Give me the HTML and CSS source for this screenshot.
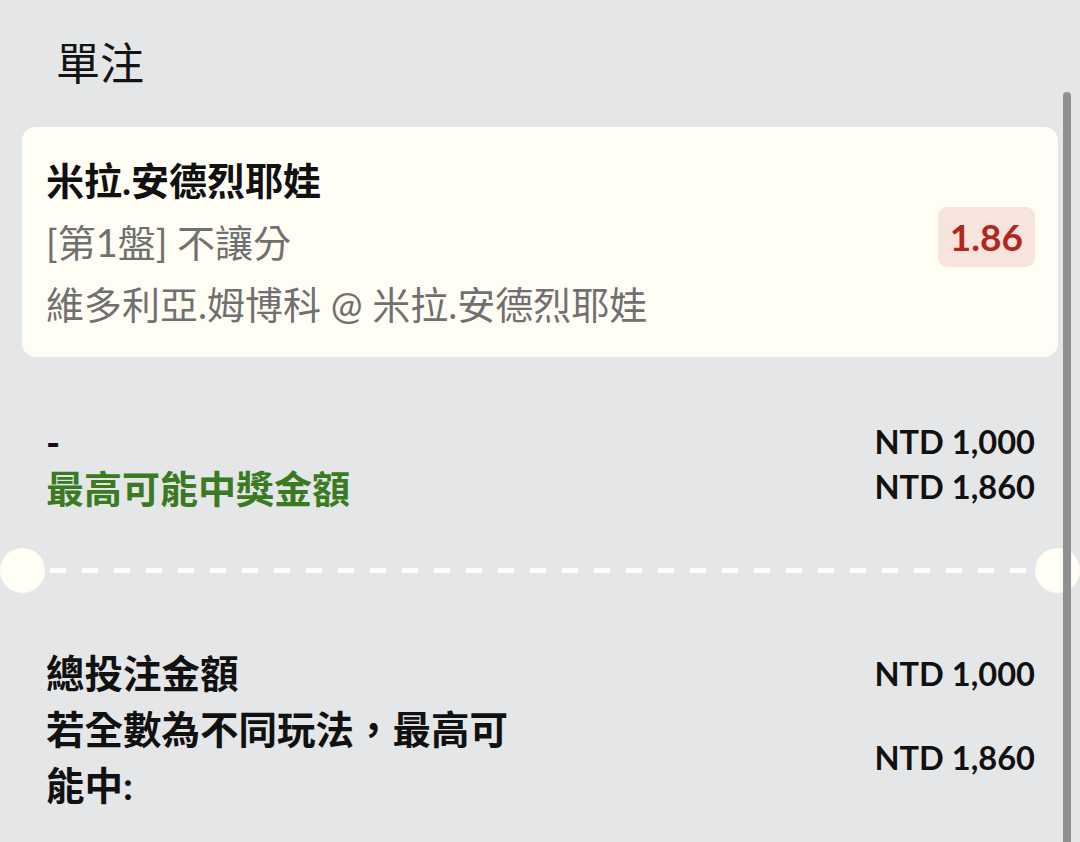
FILE: index.html
```html
<!DOCTYPE html>
<html lang="zh-Hant">
<head>
<meta charset="utf-8">
<title>單注</title>
<link rel="stylesheet" href="styles.css">
</head>
<body>
<div class="page">
  <h1 class="title">單注</h1>

  <div class="card">
    <div class="info">
      <div class="sel">米拉.安德烈耶娃</div>
      <div class="sub">[第1盤] 不讓分</div>
      <div class="sub">維多利亞.姆博科 @ 米拉.安德烈耶娃</div>
    </div>
    <div class="odds">1.86</div>
  </div>

  <div class="amounts">
    <div class="row">
      <span class="label">-</span>
      <span class="num">NTD 1,000</span>
    </div>
    <div class="row">
      <span class="label green">最高可能中獎金額</span>
      <span class="num">NTD 1,860</span>
    </div>
  </div>

  <div class="sep">
    <span class="notch notch-left"></span>
    <span class="dashes"></span>
    <span class="notch notch-right"></span>
  </div>

  <div class="totals">
    <div class="trow">
      <span class="tlabel">總投注金額</span>
      <span class="num">NTD 1,000</span>
    </div>
    <div class="trow">
      <span class="tlabel">若全數為不同玩法，最高可能中:</span>
      <span class="num">NTD 1,860</span>
    </div>
  </div>
</div>
<div class="scrollbar"></div>
</body>
</html>
```
FILE: styles.css
```css
html, body {
  margin: 0;
  padding: 0;
}
body {
  background: #e5e6e8;
  font-family: Lato, "Noto Sans CJK TC", sans-serif;
  color: #111111;
  width: 1080px;
  height: 842px;
  overflow: hidden;
  position: relative;
}
.page {
  padding: 0 22px;
}
.title {
  margin: 0;
  padding: 31px 0 0 34px;
  font-family: "Noto Sans CJK TC", sans-serif;
  font-weight: 400;
  font-size: 44px;
  line-height: 60px;
  color: #141414;
}
.card {
  margin-top: 36px;
  background: #fffdf4;
  border-radius: 14px;
  padding: 22px 23px 22px 24px;
  display: flex;
  justify-content: space-between;
  align-items: center;
}
.info {
  font-size: 38px;
  line-height: 62px;
}
.sel {
  font-weight: 700;
  color: #111111;
}
.sub {
  color: #707070;
}
.odds {
  margin-bottom: 10px;
  background: #f6e4dd;
  color: #b3261e;
  font-weight: 700;
  font-size: 37px;
  line-height: 60px;
  height: 60px;
  padding: 0 12px;
  border-radius: 9px;
}
.amounts {
  margin-top: 62px;
  padding: 0 23px 0 24px;
}
.row {
  display: flex;
  justify-content: space-between;
  align-items: center;
  height: 45px;
}
.label {
  font-weight: 700;
  font-size: 38px;
}
.green {
  color: #3a7b22;
}
.num {
  font-family: Lato, sans-serif;
  font-weight: 700;
  font-size: 32.6px;
  color: #111111;
}
.sep {
  margin-top: 39px;
  height: 45px;
  display: flex;
  align-items: center;
}
.notch {
  width: 45px;
  height: 45px;
  border-radius: 50%;
  background: #fffdf4;
  flex: none;
}
.notch-left {
  margin-left: -22px;
}
.notch-right {
  margin-right: -22px;
}
.dashes {
  flex: 1;
  height: 5px;
  margin: 0 5px;
  background: repeating-linear-gradient(to right, #fffdf4 0 16px, transparent 16px 32px);
}
.totals {
  margin-top: 52px;
  padding: 0 23px 0 24px;
}
.trow {
  display: flex;
  justify-content: space-between;
  align-items: center;
}
.tlabel {
  font-weight: 700;
  font-size: 38.5px;
  line-height: 56px;
  max-width: 480px;
}
.scrollbar {
  position: absolute;
  left: 1063px;
  top: 92px;
  width: 8px;
  height: 760px;
  background: #8f8f91;
  border-radius: 4px;
}
```
